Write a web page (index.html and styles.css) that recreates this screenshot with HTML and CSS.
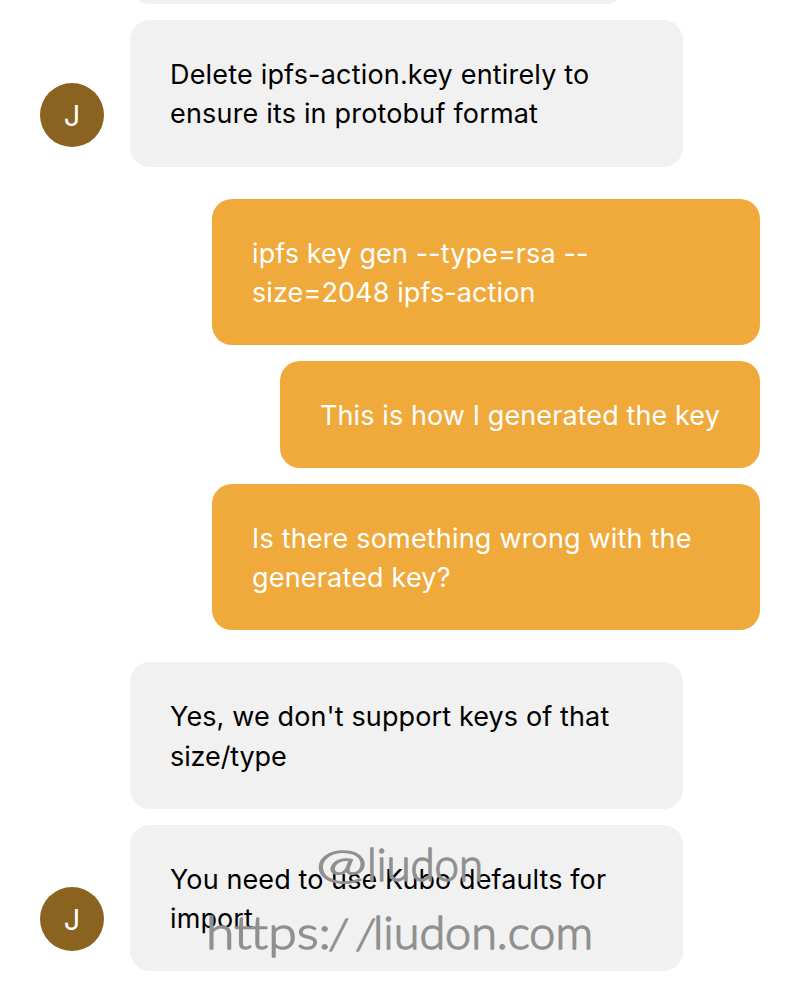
FILE: index.html
```
<!DOCTYPE html>
<html lang="en">
<head>
<meta charset="utf-8">
<title>Support chat</title>
<link rel="stylesheet" href="styles.css">
</head>
<body>
<main class="chat">
  <section class="group incoming first">
    <div class="stack">
      <div class="bubble previous"></div>
      <div class="bubble tall loose">Delete ipfs-action.key entirely to<br>ensure its in protobuf format</div>
    </div>
    <div class="avatar">J</div>
  </section>
  <section class="group outgoing">
    <div class="bubble wide">ipfs key gen --type=rsa --<br>size=2048 ipfs-action</div>
    <div class="bubble short">This is how I generated the key</div>
    <div class="bubble wide loose">Is there something wrong with the<br>generated key?</div>
  </section>
  <section class="group incoming">
    <div class="stack">
      <div class="bubble tall airy">Yes, we don't support keys of that<br><span class="tight">size/type</span></div>
      <div class="bubble">You need to use Kubo defaults for<br>import</div>
    </div>
    <div class="avatar">J</div>
  </section>
</main>
<svg class="watermark" viewBox="0 0 400 150" width="400" height="150">
  <text y="53"><tspan class="at" x="116" y="50" textLength="51" lengthAdjust="spacingAndGlyphs">@</tspan><tspan x="167" y="53" textLength="116" lengthAdjust="spacingAndGlyphs">liudon</tspan></text>
  <text y="121"><tspan x="6" textLength="125" lengthAdjust="spacingAndGlyphs">https:</tspan><tspan class="slashes" x="130" textLength="44" lengthAdjust="spacing">//</tspan><tspan x="173" textLength="220" lengthAdjust="spacingAndGlyphs">liudon.com</tspan></text>
</svg>
</body>
</html>
```
FILE: styles.css
```
* { box-sizing: border-box; }
body {
  margin: 0;
  height: 990px;
  overflow: hidden;
  position: relative;
  background: #fff;
  font-family: Inter, "Liberation Sans", sans-serif;
}
.chat {
  display: flex;
  flex-direction: column;
  gap: 32px;
  padding: 0 40px;
}
.group { display: flex; }
.incoming {
  flex-direction: row-reverse;
  justify-content: flex-end;
  align-items: flex-end;
  gap: 26px;
}
.outgoing {
  flex-direction: column;
  align-items: flex-end;
  gap: 16px;
}
.stack {
  display: flex;
  flex-direction: column;
  gap: 16px;
  width: 553px;
}
.first .stack { height: 167px; justify-content: flex-end; }
.bubble {
  flex: none;
  height: 146px;
  padding: 35px 40px 0;
  border-radius: 20px;
  background: #f1f1f1;
  color: #000;
  font-size: 27px;
  line-height: 39px;
  letter-spacing: 0.1px;
  white-space: nowrap;
}
.bubble.tall { height: 147px; }
.bubble.loose { letter-spacing: 0.18px; }
.bubble.airy { line-height: 40px; letter-spacing: 0.12px; }
.tight { letter-spacing: -0.1px; }
.bubble.previous { width: 496px; }
.outgoing .bubble { background: #f0a93b; color: #fff; }
.outgoing .wide { width: 548px; }
.outgoing .short { width: 480px; height: 107px; }
.avatar {
  flex: none;
  width: 64px;
  height: 64px;
  margin-bottom: 20px;
  border-radius: 50%;
  background: #8b6320;
  color: #fff;
  font-size: 29px;
  line-height: 66px;
  text-align: center;
}
.watermark {
  position: absolute;
  left: 200px;
  top: 828px;
  overflow: visible;
  fill: #909090;
  stroke: #909090;
  stroke-width: 1.4px;
  stroke-linejoin: round;
  font-family: Lato, sans-serif;
  font-size: 46px;
  font-weight: 300;
}
.at { font-size: 42px; }
.slashes { font-style: italic; font-size: 42px; }
```
